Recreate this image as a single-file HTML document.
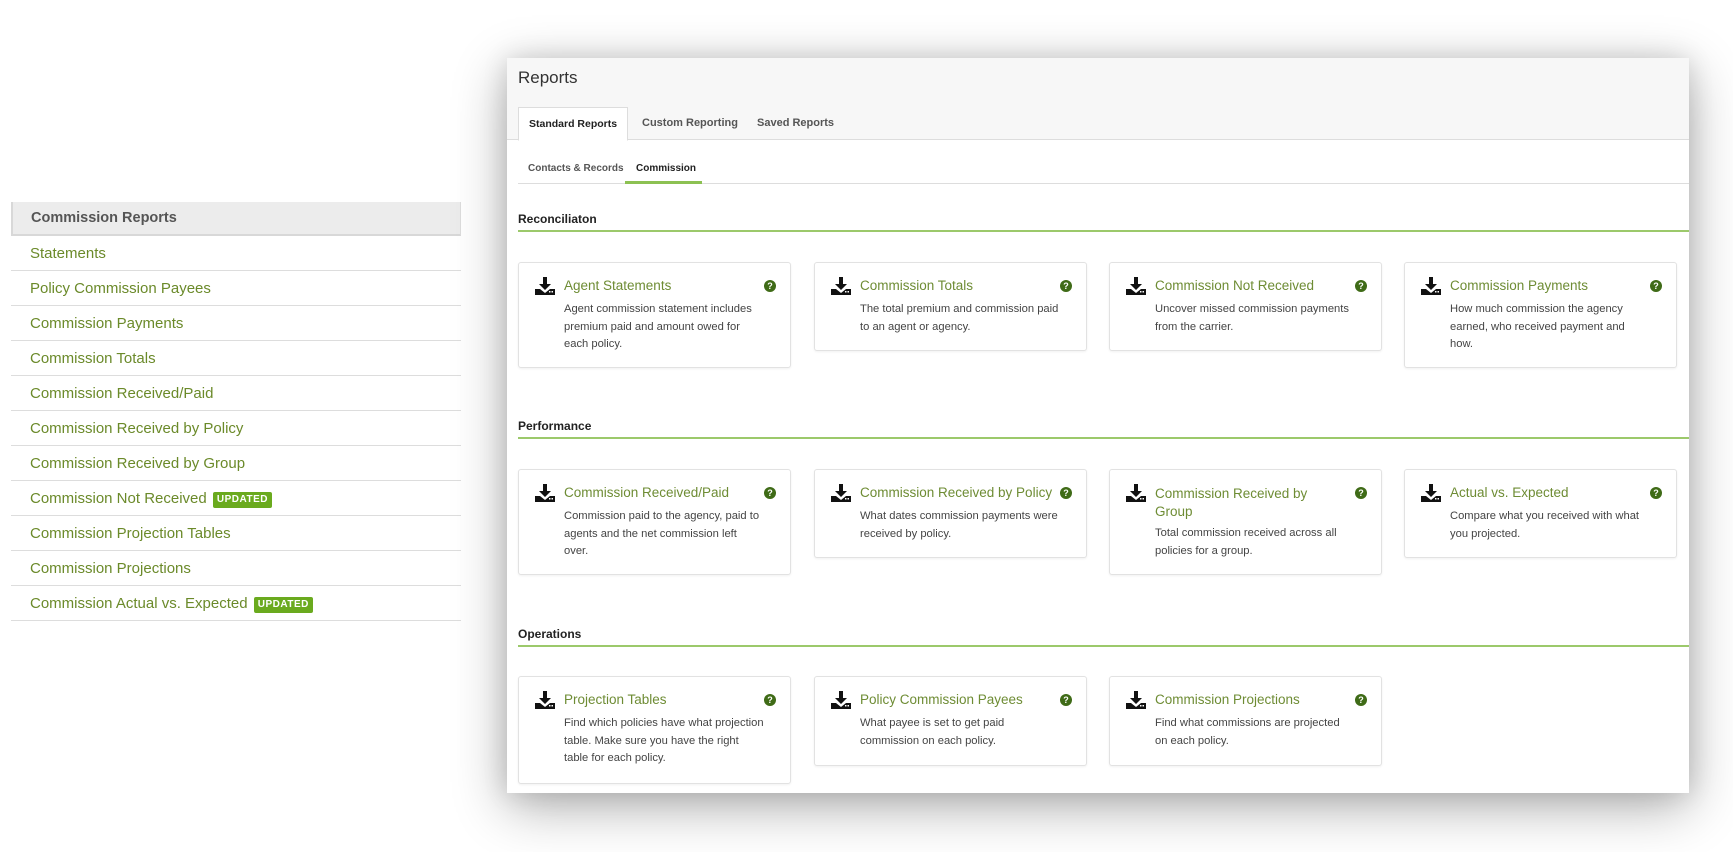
<!DOCTYPE html>
<html><head><meta charset="utf-8"><style>
*{box-sizing:border-box;margin:0;padding:0}
body{width:1733px;height:852px;background:#fff;font-family:"Liberation Sans",sans-serif;position:relative;overflow:hidden}
.side{position:absolute;left:11px;top:202px;width:450px}
.side .hd{height:34px;background:#ececec;border-left:2px solid #d8d8d8;border-bottom:2px solid #d8d8d8;border-right:1px solid #ddd;padding-left:18px;font-weight:bold;font-size:14.5px;color:#555;line-height:33px}
.side .it{height:35px;border-bottom:1px solid #ddd;padding-left:19px;font-size:15px;color:#6b8a2a;line-height:35px;white-space:nowrap}
.badge{display:inline-block;background:#6aaa1e;color:#fff;font-size:10px;font-weight:bold;letter-spacing:.5px;padding:0 4px;line-height:16px;border-radius:2px;vertical-align:1px;margin-left:2px}
.panel{position:absolute;left:507px;top:58px;width:1182px;height:735px;background:#fff;box-shadow:0 14px 50px rgba(0,0,0,.32),0 0 24px rgba(0,0,0,.12)}
.top{height:82px;background:#f7f7f7;border-bottom:1px solid #ddd;position:relative}
.title{position:absolute;left:11px;top:10px;font-size:17px;color:#333}
.tab{position:absolute;top:49px;height:33px;font-size:11px;font-weight:bold;color:#555;line-height:32px;white-space:nowrap}
.tab.act{background:#fff;border:1px solid #ddd;border-bottom:1px solid #fff;color:#222;padding:0 10px;left:11px;width:110px;height:34px;font-size:10.5px}
.sub{position:absolute;top:100px;left:11px;right:0;height:26px;border-bottom:1px solid #ddd}
.sub span{position:absolute;top:5px;font-size:10px;font-weight:bold;color:#555;white-space:nowrap}
.sub .ul{position:absolute;left:107px;width:77px;top:23px;height:3px;background:#8cc152}
.sec{position:absolute;left:11px;right:0;font-size:12px;font-weight:bold;color:#222;height:20px;border-bottom:2px solid #9cc96b}
.card{position:absolute;width:273px;border:1px solid #e2e2e2;border-radius:3px;box-shadow:0 1px 2px rgba(0,0,0,.06);background:#fff}
.card svg.dl{position:absolute;left:16px;top:14px}
.card .t{position:absolute;left:45px;top:15px;font-size:13.5px;color:#6e8c34;white-space:nowrap}
.card .q{position:absolute;left:245px;top:17px;width:12px;height:12px;border-radius:50%;background:#3f6b17;color:#fff;font-size:9px;font-weight:bold;text-align:center;line-height:12px}
.card .d{position:absolute;left:45px;top:38px;width:200px;font-size:11.2px;line-height:17.7px;color:#444}
</style></head><body>
<div class="side">
<div class="hd">Commission Reports</div>
<div class="it">Statements</div>
<div class="it">Policy Commission Payees</div>
<div class="it">Commission Payments</div>
<div class="it">Commission Totals</div>
<div class="it">Commission Received/Paid</div>
<div class="it">Commission Received by Policy</div>
<div class="it">Commission Received by Group</div>
<div class="it">Commission Not Received <span class="badge">UPDATED</span></div>
<div class="it">Commission Projection Tables</div>
<div class="it">Commission Projections</div>
<div class="it">Commission Actual vs. Expected <span class="badge">UPDATED</span></div>
</div>

<div class="panel">
<div class="top">
<div class="title">Reports</div>
<div class="tab act">Standard Reports</div>
<div class="tab" style="left:135px">Custom Reporting</div>
<div class="tab" style="left:250px">Saved Reports</div>
</div>
<div class="sub"><span style="left:10px">Contacts &amp; Records</span><span style="left:118px;color:#222">Commission</span><div class="ul"></div></div>

<div class="sec" style="top:154px">Reconciliaton</div>
<div class="sec" style="top:361px">Performance</div>
<div class="sec" style="top:569px">Operations</div>

<div class="card" style="left:11px;top:204px;height:106px"><svg class="dl" width="20" height="18" viewBox="0 0 20 18"><path d="M8 0h4v7h4l-6 6-6-6h4z" fill="#111"/><path d="M0 12h5l5 4 5-4h5v6H0z" fill="#111"/><rect x="14" y="14" width="1.5" height="1.5" fill="#fff"/><rect x="16.5" y="14" width="1.5" height="1.5" fill="#fff"/></svg><div class="t">Agent Statements</div><div class="q">?</div><div class="d">Agent commission statement includes premium paid and amount owed for each policy.</div></div>
<div class="card" style="left:307px;top:204px;height:89px"><svg class="dl" width="20" height="18" viewBox="0 0 20 18"><path d="M8 0h4v7h4l-6 6-6-6h4z" fill="#111"/><path d="M0 12h5l5 4 5-4h5v6H0z" fill="#111"/><rect x="14" y="14" width="1.5" height="1.5" fill="#fff"/><rect x="16.5" y="14" width="1.5" height="1.5" fill="#fff"/></svg><div class="t">Commission Totals</div><div class="q">?</div><div class="d">The total premium and commission paid to an agent or agency.</div></div>
<div class="card" style="left:602px;top:204px;height:89px"><svg class="dl" width="20" height="18" viewBox="0 0 20 18"><path d="M8 0h4v7h4l-6 6-6-6h4z" fill="#111"/><path d="M0 12h5l5 4 5-4h5v6H0z" fill="#111"/><rect x="14" y="14" width="1.5" height="1.5" fill="#fff"/><rect x="16.5" y="14" width="1.5" height="1.5" fill="#fff"/></svg><div class="t">Commission Not Received</div><div class="q">?</div><div class="d">Uncover missed commission payments from the carrier.</div></div>
<div class="card" style="left:897px;top:204px;height:106px"><svg class="dl" width="20" height="18" viewBox="0 0 20 18"><path d="M8 0h4v7h4l-6 6-6-6h4z" fill="#111"/><path d="M0 12h5l5 4 5-4h5v6H0z" fill="#111"/><rect x="14" y="14" width="1.5" height="1.5" fill="#fff"/><rect x="16.5" y="14" width="1.5" height="1.5" fill="#fff"/></svg><div class="t">Commission Payments</div><div class="q">?</div><div class="d">How much commission the agency earned, who received payment and how.</div></div>

<div class="card" style="left:11px;top:411px;height:106px"><svg class="dl" width="20" height="18" viewBox="0 0 20 18"><path d="M8 0h4v7h4l-6 6-6-6h4z" fill="#111"/><path d="M0 12h5l5 4 5-4h5v6H0z" fill="#111"/><rect x="14" y="14" width="1.5" height="1.5" fill="#fff"/><rect x="16.5" y="14" width="1.5" height="1.5" fill="#fff"/></svg><div class="t">Commission Received/Paid</div><div class="q">?</div><div class="d">Commission paid to the agency, paid to agents and the net commission left over.</div></div>
<div class="card" style="left:307px;top:411px;height:89px"><svg class="dl" width="20" height="18" viewBox="0 0 20 18"><path d="M8 0h4v7h4l-6 6-6-6h4z" fill="#111"/><path d="M0 12h5l5 4 5-4h5v6H0z" fill="#111"/><rect x="14" y="14" width="1.5" height="1.5" fill="#fff"/><rect x="16.5" y="14" width="1.5" height="1.5" fill="#fff"/></svg><div class="t">Commission Received by Policy</div><div class="q">?</div><div class="d">What dates commission payments were received by policy.</div></div>
<div class="card" style="left:602px;top:411px;height:106px"><svg class="dl" width="20" height="18" viewBox="0 0 20 18"><path d="M8 0h4v7h4l-6 6-6-6h4z" fill="#111"/><path d="M0 12h5l5 4 5-4h5v6H0z" fill="#111"/><rect x="14" y="14" width="1.5" height="1.5" fill="#fff"/><rect x="16.5" y="14" width="1.5" height="1.5" fill="#fff"/></svg><div class="t" style="width:190px;line-height:18px;white-space:normal">Commission Received by Group</div><div class="q">?</div><div class="d" style="top:55px">Total commission received across all policies for a group.</div></div>
<div class="card" style="left:897px;top:411px;height:89px"><svg class="dl" width="20" height="18" viewBox="0 0 20 18"><path d="M8 0h4v7h4l-6 6-6-6h4z" fill="#111"/><path d="M0 12h5l5 4 5-4h5v6H0z" fill="#111"/><rect x="14" y="14" width="1.5" height="1.5" fill="#fff"/><rect x="16.5" y="14" width="1.5" height="1.5" fill="#fff"/></svg><div class="t">Actual vs. Expected</div><div class="q">?</div><div class="d">Compare what you received with what you projected.</div></div>

<div class="card" style="left:11px;top:618px;height:108px"><svg class="dl" width="20" height="18" viewBox="0 0 20 18"><path d="M8 0h4v7h4l-6 6-6-6h4z" fill="#111"/><path d="M0 12h5l5 4 5-4h5v6H0z" fill="#111"/><rect x="14" y="14" width="1.5" height="1.5" fill="#fff"/><rect x="16.5" y="14" width="1.5" height="1.5" fill="#fff"/></svg><div class="t">Projection Tables</div><div class="q">?</div><div class="d">Find which policies have what projection table. Make sure you have the right table for each policy.</div></div>
<div class="card" style="left:307px;top:618px;height:90px"><svg class="dl" width="20" height="18" viewBox="0 0 20 18"><path d="M8 0h4v7h4l-6 6-6-6h4z" fill="#111"/><path d="M0 12h5l5 4 5-4h5v6H0z" fill="#111"/><rect x="14" y="14" width="1.5" height="1.5" fill="#fff"/><rect x="16.5" y="14" width="1.5" height="1.5" fill="#fff"/></svg><div class="t">Policy Commission Payees</div><div class="q">?</div><div class="d">What payee is set to get paid commission on each policy.</div></div>
<div class="card" style="left:602px;top:618px;height:90px"><svg class="dl" width="20" height="18" viewBox="0 0 20 18"><path d="M8 0h4v7h4l-6 6-6-6h4z" fill="#111"/><path d="M0 12h5l5 4 5-4h5v6H0z" fill="#111"/><rect x="14" y="14" width="1.5" height="1.5" fill="#fff"/><rect x="16.5" y="14" width="1.5" height="1.5" fill="#fff"/></svg><div class="t">Commission Projections</div><div class="q">?</div><div class="d">Find what commissions are projected on each policy.</div></div>
</div>
</body></html>
